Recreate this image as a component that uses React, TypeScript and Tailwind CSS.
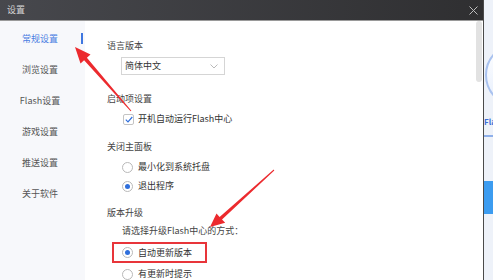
const navItems = ['常规设置', '浏览设置', 'Flash设置', '游戏设置', '推送设置', '关于软件'];

function Radio({ checked, label }: { checked?: boolean; label: string }) {
  return (
    <div className="flex h-[12px] items-center gap-[5px] leading-[12px]">
      <span className="flex h-[11px] w-[11px] items-center justify-center rounded-full border border-[#b9b9b9] bg-white">
        {checked && <span className="h-[5px] w-[5px] rounded-full bg-[#2f6fdc]" />}
      </span>
      <span className="text-[#333]">{label}</span>
    </div>
  );
}

function Arrows() {
  // annotation arrows drawn over the screenshot
  return (
    <svg className="pointer-events-none absolute inset-0" width="493" height="280" viewBox="0 0 493 280">
      <polygon
        fill="#ec2a2e"
        points="131.4,110.7 86.9,57.8 90.5,54.5 75,47 80.5,63.5 84.1,60.2 130.6,111.3"
      />
      <polygon
        fill="#ec2a2e"
        points="273.7,169.6 219.6,216.9 216.5,213.4 210,227 225.2,222.8 222,219.5 274.3,170.4"
      />
    </svg>
  );
}

export default function App() {
  return (
    <div
      className="relative flex h-[280px] w-[493px] overflow-hidden bg-white text-[9px]"
      style={{ fontFamily: '"Noto Sans CJK SC", "Noto Sans", sans-serif' }}
    >
      <div className="flex w-[484px] flex-col border-r border-[#4a4a4a]">
        <div className="flex h-[20px] items-center justify-between bg-gradient-to-r from-[#47484d] to-[#2f2f31] pl-[7px] pr-[5px]">
          <span className="text-[9px] leading-[12px] text-[#d6d6d6]">设置</span>
          <svg width="9" height="9" viewBox="0 0 9 9">
            <path d="M0.5 0.5 L8.5 8.5 M8.5 0.5 L0.5 8.5" stroke="#bdbdbd" strokeWidth="1" />
          </svg>
        </div>
        <div className="h-px bg-[#9a9a9a]" />
        <div className="flex flex-1">
          <div className="flex w-[85px] flex-col bg-[#f7f8fb] pt-[12px]">
            {navItems.map((item, i) => (
              <div key={item} className="flex h-[31px] items-start">
                <span
                  className={
                    'w-[80px] text-center leading-[12px] ' +
                    (i === 0 ? 'text-[#4a7ee2]' : 'text-[#555]')
                  }
                >
                  {item}
                </span>
                {i === 0 && <span className="ml-[1px] h-[11px] w-[2px] bg-[#3f77e0]" />}
              </div>
            ))}
          </div>
          <div className="flex flex-1">
            <div className="flex flex-1 flex-col pl-[22px] leading-[12px]">
              <div className="mt-[19px] text-[#444]">语言版本</div>
              <div className="ml-[14px] mt-[5px] flex h-[18px] w-[104px] items-center justify-between border border-[#d5d5d5] pl-[3px] pr-[6px]">
                <span className="text-[#333]">简体中文</span>
                <svg width="8" height="5" viewBox="0 0 8 5">
                  <path d="M0.5 0.5 L4 4 L7.5 0.5" fill="none" stroke="#a8a8a8" strokeWidth="0.8" />
                </svg>
              </div>
              <div className="mt-[18px] text-[#444]">启动项设置</div>
              <div className="ml-[16px] mt-[8px] flex h-[12px] items-center gap-[4px]">
                <span className="flex h-[11px] w-[11px] items-center justify-center rounded-[2px] border border-[#c4c4c4] bg-white">
                  <svg width="8" height="7" viewBox="0 0 8 7">
                    <path d="M0.8 3.6 L3 5.8 L7.3 1" fill="none" stroke="#2f6fdc" strokeWidth="1.2" />
                  </svg>
                </span>
                <span className="text-[#333]">开机自动运行Flash中心</span>
              </div>
              <div className="mt-[16px] text-[#444]">关闭主面板</div>
              <div className="ml-[15px] mt-[8px]">
                <Radio label="最小化到系统托盘" />
              </div>
              <div className="ml-[15px] mt-[7px]">
                <Radio checked label="退出程序" />
              </div>
              <div className="mt-[15px] text-[#444]">版本升级</div>
              <div className="ml-[15px] mt-[6px] text-[#444]">请选择升级Flash中心的方式：</div>
              <div className="ml-[5px] mt-[5px] flex h-[21px] w-[95px] items-center border-2 border-[#e8353a] pl-[8px]">
                <Radio checked label="自动更新版本" />
              </div>
              <div className="ml-[15px] mt-[5px]">
                <Radio label="有更新时提示" />
              </div>
            </div>
            <div className="mr-[1px] w-[6px]">
              <div className="h-[61px] rounded-[3px] bg-[#e2e2e2]" />
            </div>
          </div>
        </div>
      </div>
      <div className="flex w-[9px] flex-col overflow-hidden bg-[#eef2f9]">
        <div className="ml-[1px] mt-[43px] h-[64px] w-[64px] shrink-0 rounded-full border-2 border-[#a9c2ef] bg-gradient-to-b from-white to-[#e6eefc]" />
        <div className="mt-[9px] whitespace-nowrap text-[8px] font-semibold leading-[12px] text-[#3d6fd6]">Fla</div>
        <div className="mt-[7px] h-[2px] w-[9px] bg-[#8fb0ea]" />
        <div className="mt-[44px] h-[33px] w-[9px] bg-[#3c9cf0]" />
      </div>
      <Arrows />
    </div>
  );
}
